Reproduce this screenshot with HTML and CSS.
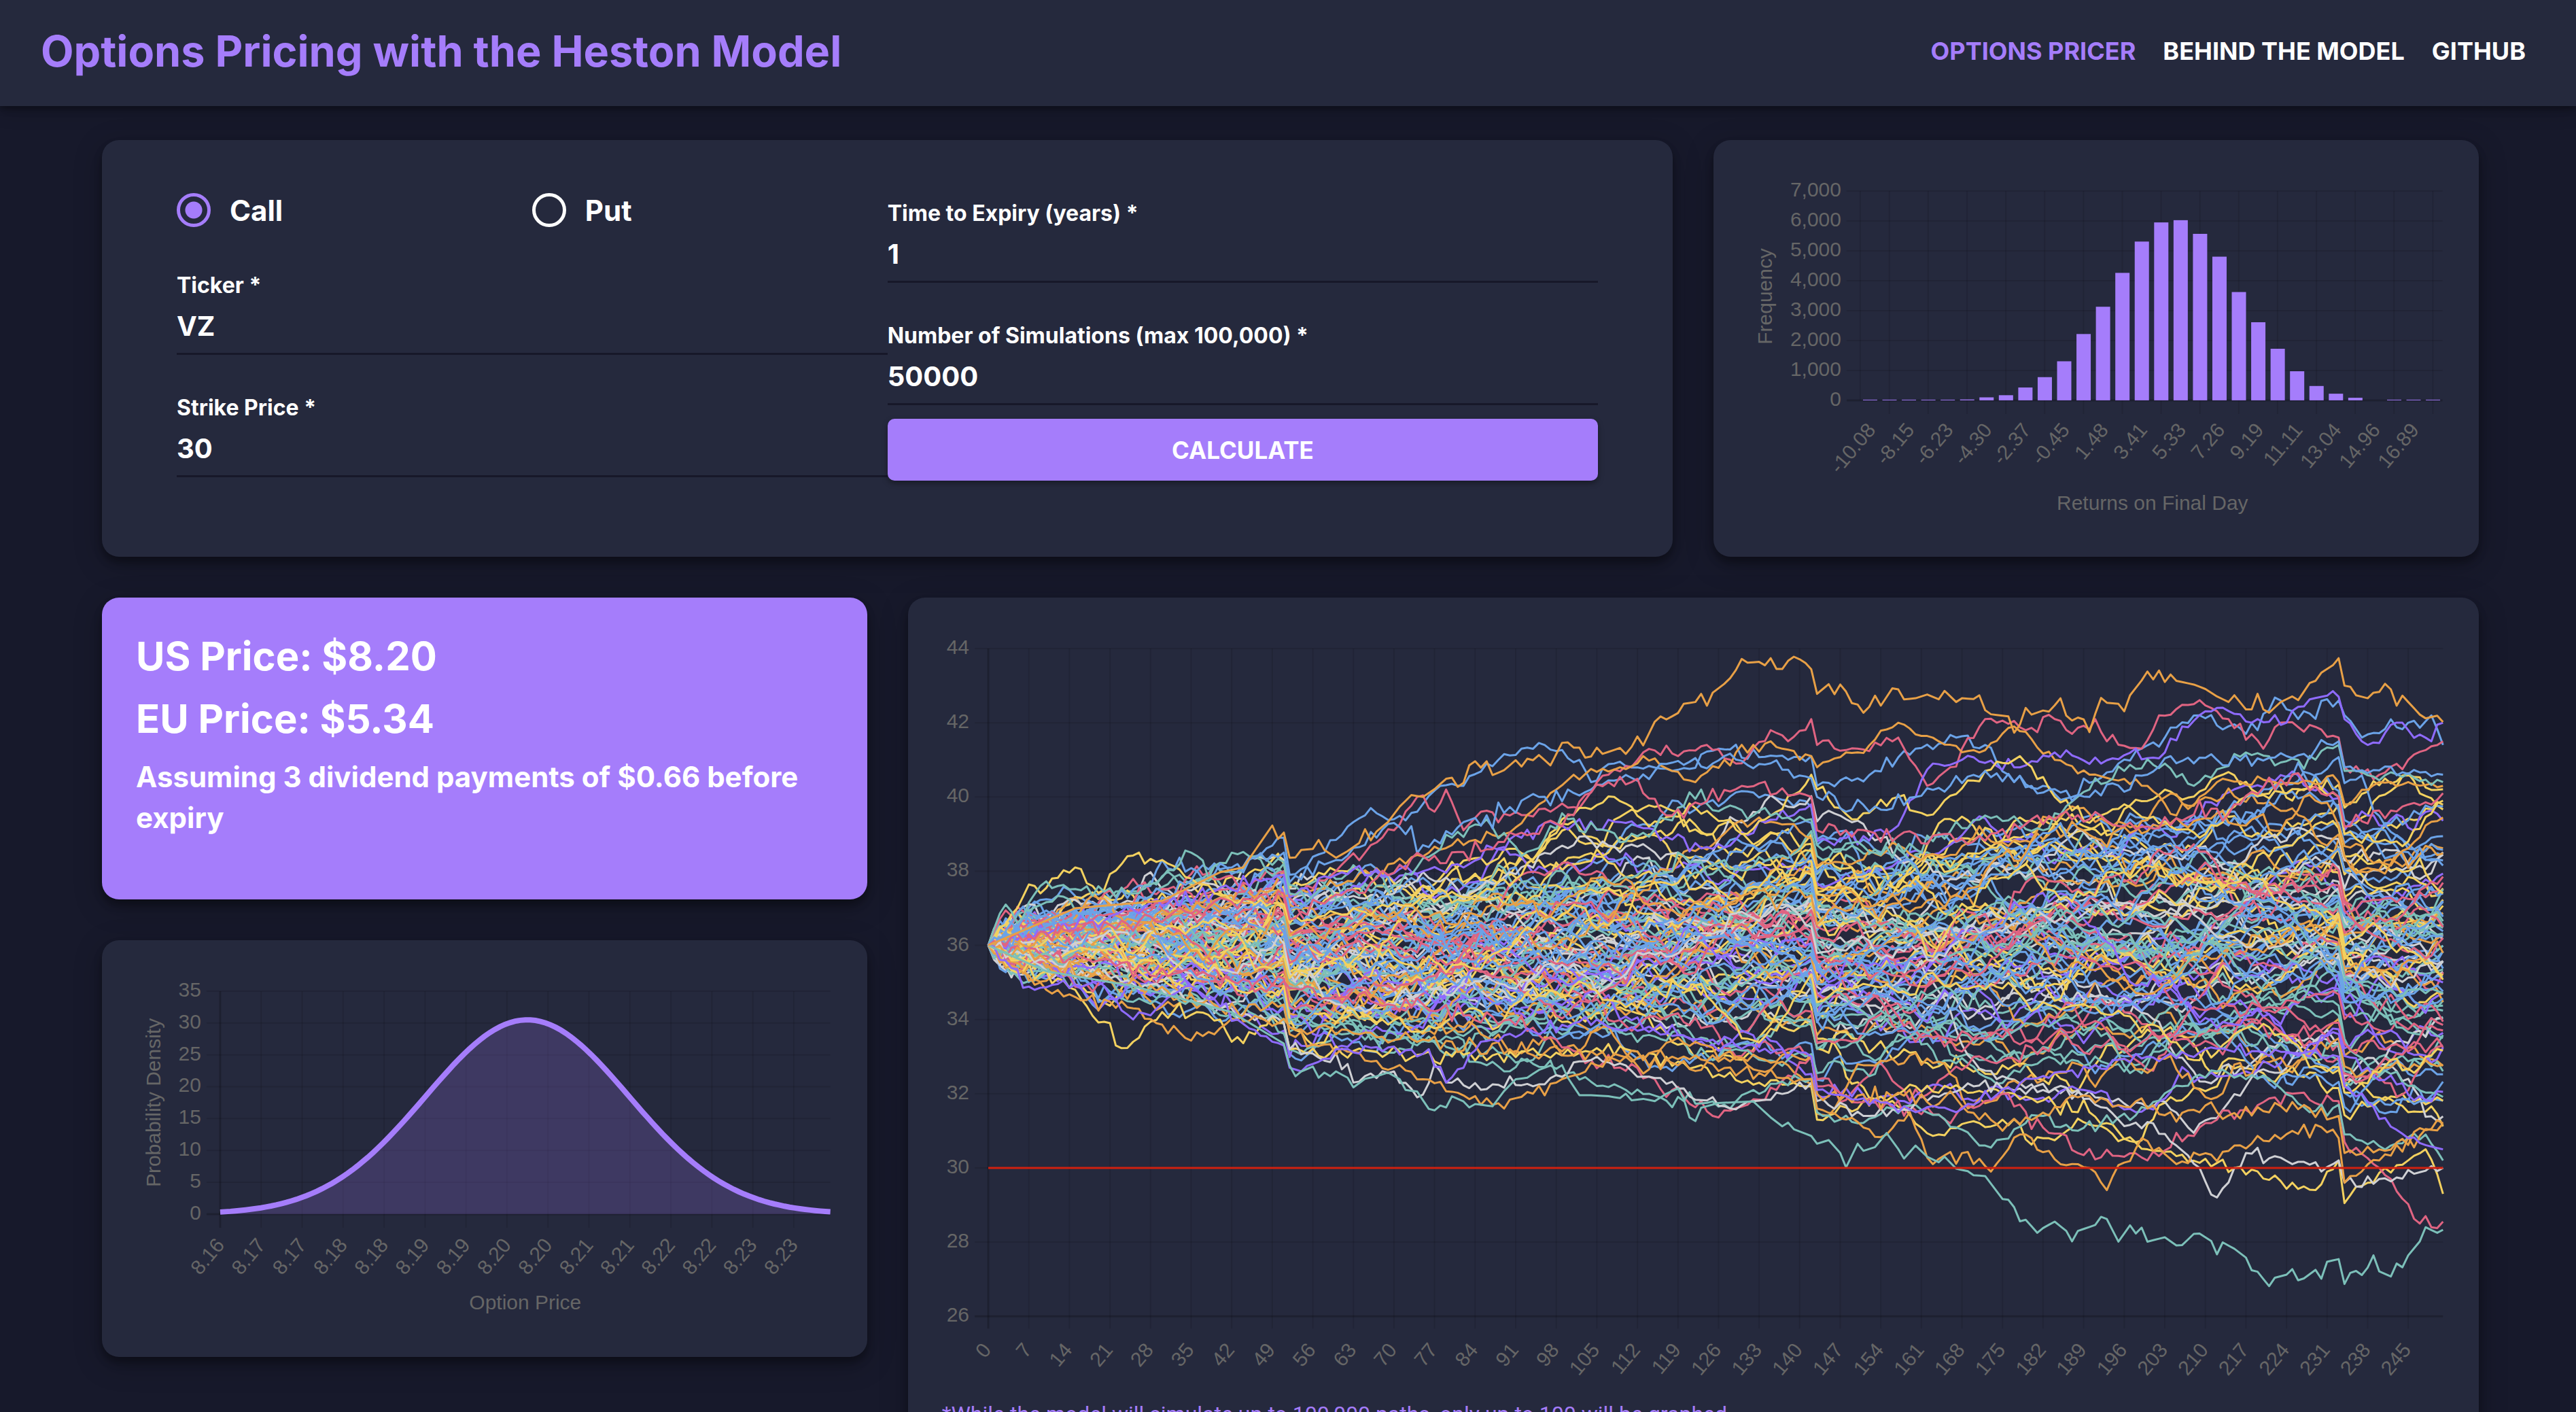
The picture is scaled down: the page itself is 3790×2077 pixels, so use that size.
FILE: index.html
```html
<!DOCTYPE html>
<html lang="en">
<head>
<meta charset="utf-8">
<title>Options Pricing with the Heston Model</title>
<link rel="stylesheet" href="styles.css">
</head>
<body>
<header class="app-bar">
  <h1 class="app-title">Options Pricing with the Heston Model</h1>
  <nav class="nav">
    <a class="nav-link nav-link-active" href="#pricer">Options Pricer</a>
    <a class="nav-link" href="#model">Behind the Model</a>
    <a class="nav-link" href="#github">GitHub</a>
  </nav>
</header>
<main class="board" id="pricer">
  <section class="card card-form">
    <form class="form">
      <div class="form-column">
        <div class="radios">
          <label class="radio"><input class="radio-input" type="radio" name="kind" value="call" checked>Call</label>
          <label class="radio"><input class="radio-input" type="radio" name="kind" value="put">Put</label>
        </div>
        <div class="field">
          <label class="field-label" for="ticker">Ticker *</label>
          <input class="field-input" id="ticker" type="text" value="VZ">
        </div>
        <div class="field">
          <label class="field-label" for="strike">Strike Price *</label>
          <input class="field-input" id="strike" type="text" value="30">
        </div>
      </div>
      <div class="form-column">
        <div class="field">
          <label class="field-label" for="expiry">Time to Expiry (years) *</label>
          <input class="field-input" id="expiry" type="text" value="1">
        </div>
        <div class="field">
          <label class="field-label" for="sims">Number of Simulations (max 100,000) *</label>
          <input class="field-input" id="sims" type="text" value="50000">
        </div>
        <button class="submit" type="button">Calculate</button>
      </div>
    </form>
  </section>
  <section class="card">
    <svg class="chart" id="returns" viewBox="0 0 1026 513" role="img" aria-label="Returns on final day"></svg>
  </section>
  <div class="side">
    <section class="card card-price">
      <h2 class="price">US Price: $8.20</h2>
      <h2 class="price">EU Price: $5.34</h2>
      <p class="price-note">Assuming 3 dividend payments of $0.66 before expiry</p>
    </section>
    <section class="card">
      <svg class="chart" id="density" viewBox="0 0 1026 513" role="img" aria-label="Option price density"></svg>
    </section>
  </div>
  <section class="card card-paths">
    <svg class="chart" id="paths" viewBox="0 0 2211 1106" role="img" aria-label="Simulated price paths"></svg>
    <p class="caption">*While the model will simulate up to 100,000 paths, only up to 100 will be graphed</p>
  </section>
</main>
<script src="charts.js"></script>
</body>
</html>
```
FILE: styles.css
```css
* {
  box-sizing: border-box;
}

body {
  margin: 0;
  height: 100vh;
  overflow-y: auto;
  scrollbar-width: none;
  background: #17192b;
  color: #fff;
  font-family: Inter, "Open Sans", sans-serif;
  font-weight: 700;
}

h1,
h2,
p {
  margin: 0;
}

.app-bar {
  display: flex;
  align-items: center;
  justify-content: space-between;
  height: 156px;
  padding: 0 74px 6px 60px;
  background: #25293d;
  box-shadow: 0 4px 10px rgba(0, 0, 0, 0.35), 0 10px 25px rgba(0, 0, 0, 0.15);
}

.app-title {
  color: #a57dfb;
  font-size: 63px;
  line-height: 80px;
}

.nav {
  display: flex;
  gap: 40px;
}

.nav-link {
  color: #fff;
  font-size: 36px;
  line-height: 60px;
  text-decoration: none;
  text-transform: uppercase;
}

.nav-link-active {
  color: #a57dfb;
}

.board {
  display: grid;
  grid-template-columns: repeat(3, minmax(0, 1fr));
  gap: 60px;
  align-items: start;
  padding: 50px 143px 50px 150px;
}

.card {
  padding: 50px;
  border-radius: 25px;
  background: #25293d;
  box-shadow: 0 8px 12px rgba(0, 0, 0, 0.3), 0 10px 40px rgba(0, 0, 0, 0.25);
}

.card-form {
  grid-column: span 2;
  align-self: stretch;
  padding: 50px 110px;
}

.card-paths {
  grid-column: span 2;
}

.form {
  display: grid;
  grid-template-columns: 1fr 1fr;
}

.form-column {
  display: flex;
  flex-direction: column;
}

.radios {
  display: grid;
  grid-template-columns: 1fr 1fr;
  height: 106px;
}

.radio {
  display: flex;
  align-items: center;
  gap: 28px;
  font-size: 42px;
}

.radio-input {
  appearance: none;
  width: 50px;
  height: 50px;
  margin: 0;
  border: 5px solid #fff;
  border-radius: 50%;
}

.radio-input:checked {
  border-color: #a57dfb;
  background: radial-gradient(circle, #a57dfb 12px, transparent 13px);
}

.field {
  display: flex;
  flex-direction: column;
  height: 180px;
  padding-top: 34px;
}

.field-label {
  font-size: 32px;
  line-height: 48px;
}

.field-input {
  height: 78px;
  padding: 0 0 4px;
  border: 0;
  border-bottom: 3px solid #171829;
  border-radius: 0;
  outline: 0;
  background: none;
  color: #fff;
  font: inherit;
  font-size: 40px;
}

.submit {
  height: 91px;
  border: 0;
  border-radius: 10px;
  background: #a57dfb;
  box-shadow: 0 4px 8px rgba(0, 0, 0, 0.35);
  color: #fff;
  font: inherit;
  font-size: 35px;
  text-transform: uppercase;
}

.side {
  display: grid;
  gap: 60px;
}

.card-price {
  height: 444px;
  padding-top: 46px;
  background: #a57dfb;
}

.price {
  margin-bottom: 12px;
  font-size: 58px;
  line-height: 80px;
}

.price-note {
  margin-top: 16px;
  font-size: 42px;
  line-height: 60px;
}

.caption {
  margin-top: 20px;
  color: #a57dfb;
  font-family: Roboto, sans-serif;
  font-size: 32px;
  font-weight: 400;
  line-height: 50px;
}

.chart {
  display: block;
  width: 100%;
  height: auto;
  fill: #666;
  font-family: "Liberation Sans", Arial, sans-serif;
  font-size: 30px;
  font-weight: 400;
}

.label-end {
  text-anchor: end;
}

.label-mid {
  text-anchor: middle;
}

.grid-line {
  stroke: rgba(0, 0, 0, 0.1);
  stroke-width: 2;
}

.zero-line {
  stroke: rgba(0, 0, 0, 0.2);
  stroke-width: 3;
}

.bar {
  fill: #a57dfb;
}

.density-area {
  fill: rgba(165, 125, 251, 0.2);
}

.density-line {
  fill: none;
  stroke: #a57dfb;
  stroke-width: 8;
}

.path {
  fill: none;
  stroke-width: 3;
  stroke-linejoin: round;
}

.strike-line {
  stroke: #d0200f;
  stroke-width: 3;
}
```
FILE: charts.js
```js
const NS = "http://www.w3.org/2000/svg";

function add(svg, tag, attrs, text) {
  const el = document.createElementNS(NS, tag);
  for (const key in attrs) el.setAttribute(key, attrs[key]);
  if (text !== undefined) el.textContent = text;
  svg.appendChild(el);
}

function line(svg, cls, x1, y1, x2, y2) {
  add(svg, "line", { class: cls, x1, y1, x2, y2 });
}

function yAxis(svg, c, labels) {
  labels.forEach((text, i) => {
    const y = c.bottom - (c.bottom - c.top) * i / (labels.length - 1);
    line(svg, i ? "grid-line" : "zero-line", c.left - 20, y, c.right, y);
    add(svg, "text", { class: "label-end", x: c.left - 28, y: y + 8 }, text);
  });
}

function slanted(svg, x, y, text) {
  add(svg, "text", { class: "label-end", y: 10, transform: `translate(${x} ${y}) rotate(-50)` }, text);
}

function upright(svg, y, text) {
  add(svg, "text", { class: "label-mid", transform: `translate(36 ${y}) rotate(-90)` }, text);
}

/* histogram of final-day returns */
(function () {
  const svg = document.getElementById("returns");
  const c = { left: 166, right: 1023, top: 25, bottom: 333 };
  const counts = [8, 8, 8, 8, 8, 30, 100, 172, 430, 776, 1306, 2218, 3130, 4263, 5310, 5950, 6025, 5568,
    4805, 3622, 2612, 1725, 973, 480, 222, 86, 0, 8, 8, 8];
  const names = ["-10.08", "-8.15", "-6.23", "-4.30", "-2.37", "-0.45", "1.48", "3.41", "5.33", "7.26",
    "9.19", "11.11", "13.04", "14.96", "16.89"];
  const step = (c.right - c.left) / counts.length;
  yAxis(svg, c, ["0", "1,000", "2,000", "3,000", "4,000", "5,000", "6,000", "7,000"]);
  line(svg, "grid-line", c.left, c.top, c.left, c.bottom);
  names.forEach((name, i) => {
    const x = c.left + step * (2 * i + 1.5);
    line(svg, "grid-line", x, c.top, x, c.bottom + 20);
    slanted(svg, c.left + step * (2 * i + 0.5) + 2, c.bottom + 38, name);
  });
  counts.forEach((n, i) => {
    if (!n) return;
    const h = Math.max(1, n * (c.bottom - c.top) / 7000);
    add(svg, "rect", { class: "bar", x: c.left + step * i + 4, y: c.bottom - h, width: 21, height: h });
  });
  upright(svg, 180, "Frequency");
  add(svg, "text", { class: "label-mid", x: 596, y: 494 }, "Returns on Final Day");
})();

/* density of the option price */
(function () {
  const svg = document.getElementById("density");
  const c = { left: 124, right: 1022, top: 25, bottom: 353 };
  yAxis(svg, c, ["0", "5", "10", "15", "20", "25", "30", "35"]);
  ["8.16", "8.17", "8.17", "8.18", "8.18", "8.19", "8.19", "8.20", "8.20", "8.21", "8.21", "8.22", "8.22",
    "8.23", "8.23"].forEach((name, i) => {
    const x = c.left + 60.3 * i;
    line(svg, i ? "grid-line" : "zero-line", x, c.top, x, c.bottom + 20);
    slanted(svg, x, c.bottom + 40, name);
  });
  const pts = [];
  for (let i = 0; i <= 120; i++) {
    const z = i / 20 - 3.02;
    const y = c.bottom - 30.5 * Math.exp(-z * z / 2) * (c.bottom - c.top) / 35;
    pts.push((c.left + (c.right - c.left) * i / 120).toFixed(1) + " " + y.toFixed(1));
  }
  const d = "M" + pts.join("L");
  add(svg, "path", { class: "density-area", d: `${d}L${c.right} ${c.bottom}L${c.left} ${c.bottom}Z` });
  add(svg, "path", { class: "density-line", d });
  upright(svg, 189, "Probability Density");
  add(svg, "text", { class: "label-mid", x: 573, y: 493 }, "Option Price");
})();

/* simulated paths, one point per trading day */
(function () {
  const svg = document.getElementById("paths");
  const c = { left: 68, right: 2208, top: 25, bottom: 1007 };
  const DAYS = 251;
  const EX_DAYS = [52, 143, 234];
  const DIVIDEND = 0.66;
  const RED = "#e06482", ORANGE = "#e8a046", YELLOW = "#f3d15f", TEAL = "#7cc0b9", BLUE = "#6ba3e8",
    PURPLE = "#8f6bff", GREY = "#cfd0d4";
  const palette = [RED, ORANGE, YELLOW, TEAL, BLUE, PURPLE, GREY];

  let seed = 20210;
  function rand() {
    seed = (seed + 0x6d2b79f5) | 0;
    let t = Math.imul(seed ^ (seed >>> 15), 1 | seed);
    t = (t + Math.imul(t ^ (t >>> 7), 61 | t)) ^ t;
    return ((t ^ (t >>> 14)) >>> 0) / 4294967296;
  }
  function normal() {
    return Math.sqrt(-2 * Math.log(1 - rand())) * Math.cos(2 * Math.PI * rand());
  }
  function pick(list) {
    return list[Math.floor(rand() * list.length)];
  }
  function at(knots, t) {
    for (let i = 1; i < knots.length; i++) {
      const [x0, y0] = knots[i - 1], [x1, y1] = knots[i];
      if (t <= x1) return y0 + (y1 - y0) * (t - x0) / (x1 - x0);
    }
    return knots[knots.length - 1][1];
  }
  function pairs(text) {
    return text.trim().split(/\s+/).map(p => p.split(",").map(Number));
  }
  function draw(values, stroke) {
    const d = "M" + values.map((v, i) =>
      (c.left + (c.right - c.left) * i / DAYS).toFixed(1) + " " +
      (c.top + (44 - v) * (c.bottom - c.top) / 18).toFixed(1)).join("L");
    add(svg, "path", { class: "path", d, stroke });
  }

  const ceiling = pairs("0,36.05 1,36.6 3,37 8,37.6 30,38.3 51,38.6 52,38 75,38.6 100,39.9 130,40.4 142,40.8 143,39.7 200,40.6 233,41.6 234,40.7 251,40.8");
  const floor = pairs("0,35.95 1,35.5 4,35 10,34.7 20,34.1 51,33.4 52,32.8 85,32.2 142,31.9 143,31.3 190,30.1 233,30.2 234,29.8 251,30");

  function simulate() {
    for (;;) {
      const values = [36];
      let v = 36, drift = 0, ok = true;
      for (let t = 1; t <= DAYS; t++) {
        drift = 0.2 * drift + 0.155 * normal();
        v += drift + 0.006 + (36 - v) * 0.0006;
        if (t < 8) v += 0.12 * normal();
        if (EX_DAYS.includes(t)) v -= DIVIDEND;
        if (v > at(ceiling, t) || v < at(floor, t)) { ok = false; break; }
        values.push(v);
      }
      if (ok) return values;
    }
  }
  function follow(knots, rough) {
    const values = [];
    for (let t = 0; t <= DAYS; t++) {
      const anchored = knots.some(k => k[0] === t);
      values.push(at(knots, t) + (anchored ? 0 : rough * normal()));
    }
    return values;
  }
  function colour(values) {
    if (rand() < 0.55) return pick(palette);
    const v = values[160];
    if (v > 38.4) return pick([RED, RED, BLUE, TEAL, PURPLE]);
    if (v > 37.2) return pick([YELLOW, GREY, YELLOW, BLUE]);
    if (v > 35.8) return pick([TEAL, TEAL, BLUE, GREY, RED]);
    if (v > 34.3) return pick([BLUE, PURPLE, BLUE, TEAL]);
    return pick([ORANGE, YELLOW, ORANGE, RED]);
  }

  yAxis(svg, c, ["26", "28", "30", "32", "34", "36", "38", "40", "42", "44"]);
  for (let day = 0; day <= 245; day += 7) {
    const x = c.left + (c.right - c.left) * day / DAYS;
    line(svg, day ? "grid-line" : "zero-line", x, c.top, x, c.bottom + 18);
    slanted(svg, x - 2, c.bottom + 44, day);
  }

  const tracked = [
    [BLUE, 0.1, "0,36 20,37 28,37.6 30,38.3 36,38 42,38.1 46,38.4 50,38.9 51,38.9 52,37.9 58,38.5 62,39.2 66,39.7 70,39.4 74,39.6 78,40.3 82,40.3 86,40.9 92,41.3 96,41.4 102,41 104,40.4 108,40.9 118,40.7 126,41.3 136,41.1 142,41.1 143,40.3 150,40.5 160,41.3 167,41.6 172,41.4 176,40.6 182,40.3 187,40 195,40.9 203,41.6 209,42.2 217,41.7 223,42.6 226,42.1 233,42.6 234,42.2 237,41.6 245,42 249,42.2 251,41.4"],
    [RED, 0.1, "0,36 40,37.5 51,38 52,37.3 60,38 66,38.7 70,39.1 74,40 77,39.6 79,40.2 82,39.1 85,39.6 90,39.5 97,39.6 102,39.7 107,40.6 113,41.2 119,41.1 124,41.4 129,40.9 135,41.8 138,41.5 142,42.1 143,41.4 150,41.3 157,41.6 162,40.3 166,40.8 168,41.3 172,42.1 179,41.8 184,42.1 187,41.7 191,42.1 193,41.5 199,41.3 202,42.2 208,42.5 214,42.1 220,41.3 223,42 233,41.6 234,40.8 240,40.6 245,41 251,41.5"],
    [ORANGE, 0.08, "0,36 60,37.6 80,38.7 89,39 95,39.8 101,40.6 109,40.8 113,41.1 122,40.4 129,41.2 135,41.5 140,41 142,41.1 143,40.8 150,41.2 157,42 164,41.5 171,41.2 177,41.9 184,41 190,40.6 200,40.3 205,39.5 212,40.4 222,40.4 233,40.4 234,39.8 240,40.4 251,40.3"],
    [PURPLE, 0.1, "0,36 51,37.9 52,37.3 60,37.9 82,38.1 95,39.2 110,39.3 125,38.6 142,39.8 143,38.8 155,39 160,40 163,40.9 168,41 177,40.8 184,41.2 192,40.9 203,41.2 206,41.9 212,42.4 218,42 224,42 230,42.7 233,42.7 234,42.1 238,41.4 244,42 249,41.5 251,42"],
    [YELLOW, 0.08, "0,36 8,37.6 9,37.4 11,37.8 15,38.1 18,37.6 20,37.5 24,38.4 26,38.5 27,38.2 30,38.3 35,37.8 42,37.2 51,37.1 52,36.6 90,37.6 100,39.5 108,40 114,39.2 122,39.7 130,39 136,39.6 142,40.6 143,40.2 150,39.4 157,40 162,39.5 172,40.7 178,41.1 184,40 190,39.3 196,39.8 204,39.2 210,39 217,40 230,40.2 233,40 234,39 245,38.8 251,39.9"],
    [TEAL, 0.12, "0,36 3,37.1 5,36.6 9,37.6 12,37.6 25,37.4 35,38.5 38,37.8 42,38.5 45,38.4 48,38 51,38.2 52,37.4 70,37.6 80,38.9 86,39.4 92,38.4 100,39.4 110,38.8 117,39.4 123,40.2 127,39.7 132,39.5 142,39.4 143,38.7 160,38.6 172,39.5 182,39.1 190,40.2 196,40.7 203,40.9 208,40.3 217,41.2 226,41 233,41.4 234,40.7 251,40.4"],
    [BLUE, 0.12, "0,36 51,38.5 52,37.7 60,38.3 70,39.3 75,38.7 92,39.9 104,40.2 115,40.7 127,41.1 142,40.5 143,40 152,39.6 160,40 172,40.7 180,40.3 190,40 200,40.6 204,41.1 212,41 224,41.1 233,41.5 234,40.8 251,40.6"],
    [RED, 0.12, "0,36 51,37.4 52,36.7 75,38.4 95,39 107,40.4 111,40.4 117,39.5 130,40.3 142,40 143,39.1 170,38.8 180,39.4 190,39.4 200,39.2 215,39.8 225,40.6 233,40 234,39.2 251,40.1"],
    [YELLOW, 0.1, "0,36 15,34.8 18,34.1 21,33.9 22,33.3 25,33.4 30,34.2 36,34.2 40,34 42,33.4 50,33.9 51,33.9 52,33.2 80,33 110,33.2 130,32.3 142,32.2 143,31.3 160,32.2 175,32 190,31.5 200,30.5 215,30 225,29.6 229,29.4 231,29.9 233,30.2 234,29.05 238,29.6 248,30.5 251,29.3"],
    [RED, 0.12, "0,36 90,34 118,32.1 125,31.4 131,31.7 142,33 143,32.2 165,31.3 175,32 188,30.4 200,30.2 212,31.3 225,32 233,31.8 234,30.7 242,29.7 247,28.5 248,28.7 249,28.4 251,28.55"],
    [TEAL, 0.1, "0,36 52,34 90,33 110,32.1 128,31.6 132,32.1 142,32.4 143,31.5 150,31.2 160,31.7 172,30.6 182,31.4 188,31 200,31.6 212,32.6 221,32.4 228,31.5 233,31.7 234,30.9 242,30.6 248,30.9 251,30.2"],
    [GREY, 0.1, "0,36 51,33.9 52,33.2 62,32.8 63,32.3 70,32.6 74,31.9 77,32.8 80,32.3 94,32.2 105,33 128,31.6 142,32.3 143,31.8 152,31.4 170,32.2 188,32.1 195,31.3 201,31.2 205,30.6 209,30 212,29.2 215,30 217,30.4 225,30.1 230,29.9 233,30.2 234,29.6 240,29.7 251,30"],
    [ORANGE, 0.1, "0,36 10,34.8 25,34.3 34,33.5 39,33.6 45,34.4 51,34.4 52,33.6 70,32.7 87,31.7 110,33 142,32.4 143,31.6 155,30.9 159,31.5 163,30.1 168,30.4 173,29.9 178,30.9 185,30.1 190,30 193,29.4 199,30.8 205,30.1 215,30.6 230,31.1 233,30.8 234,29.6 240,30.2 251,31.2"],
    [ORANGE, 0.12, "0,36 52,33.8 90,33.2 120,33 142,33 143,32 165,31.9 175,31 188,31.9 200,31.6 212,31.5 228,31.6 233,31.4 234,30.4 240,30.5 251,31.2"],
    [PURPLE, 0.1, "0,36 8,34.8 20,34.9 25,34 35,34.9 43,34 49,33.4 51,33.3 52,32.7 54,32.6 60,33.2 76,33.2 79,32.3 85,33.4 105,34 142,33 143,32.1 160,31.5 170,31.7 180,32.4 210,33.2 233,33 234,32.2 245,30.8 251,30.5"]
  ];

  for (let i = 0; i < 92; i++) {
    const values = simulate();
    draw(values, colour(values));
  }
  tracked.forEach(([stroke, rough, text]) => draw(follow(pairs(text), rough), stroke));

  const lowest = "0,36 10,35.3 25,34.9 42,34.2 51,33.35 52,32.76 53,32.47 54,32.6 56,32.73 57,32.43 58,32.57 59,32.47 60,32.6 62,32.43 63,32.17 65,32.4 67,32.47 69,32.57 71,32.39 72,32.1 74,32.06 76,31.59 77,31.55 78,31.68 79,31.63 80,31.93 82,31.79 83,31.63 84,31.72 86,31.68 87,31.66 89,32.07 91,32.39 93,32.43 95,32.64 97,32.76 98,32.67 99,32.77 100,32.43 102,31.96 104,31.96 107,31.93 109,31.88 110,32 111,31.82 113,31.86 115,31.8 117,32 119,32.14 120,31.86 121,31.36 122,31.26 123,31.62 126,31.75 132,31.79 135,31.36 137,31.12 138,31.22 139,31.04 142,30.86 143,30.65 145,30.75 147,30.4 148,30.01 150,30.65 151,30.46 153,30.56 155,30.94 157,30.51 158,30.25 160,30.6 162,30.3 164,30.15 165,30.3 167,29.98 169,29.91 170,29.8 172,29.78 175,29.16 176,29.14 177,28.94 178,28.56 179,28.6 181,28.25 182,28.38 184,28.55 186,28.3 187,28.02 188,28.3 191,28.46 192,28.68 193,28.62 195,28.01 197,28.45 198,28.23 199,28.39 200,28.01 203,28.13 205,27.91 206,27.92 208,28.22 209,28.23 211,28.03 212,27.67 213,27.99 215,27.82 217,27.58 218,27.24 219,27.2 221,26.81 222,27.04 224,27.12 225,27.27 226,26.97 227,27.02 229,27.25 230,27.01 231,27.47 233,27.54 234,26.87 235,27.17 236,27.22 237,27.11 238,27.31 239,27.64 240,27.21 242,27.07 243,27.42 244,27.32 245,27.64 247,28.02 248,28.4 250,28.25 251,28.33";
  const highest = "0,36 15,37 30,37.2 40,37.97 44,38.1 49,39.23 50,38.87 51,39.04 52,38.36 53,38.37 54,38.57 56,38.6 57,38.84 58,38.57 60,38.36 62,38.54 64,38.76 65,39.13 66,38.83 67,39.07 69,39.33 71,39.74 73,40.05 75,40 77,40.21 79,40.49 80,40.52 81,40.27 82,40.38 83,40.85 84,40.96 85,40.79 86,40.96 87,40.59 89,40.72 91,40.99 92,40.82 93,41.03 94,40.99 95,41.13 97,40.85 99,41.46 100,41.47 101,41.33 102,41.33 103,41.06 104,41.09 105,41.33 106,41.16 109,41.32 110,41.16 111,41.35 112,41.63 113,41.39 115,42.03 116,42.17 117,42.09 119,42.26 120,42.51 122,42.56 123,42.78 124,42.46 125,42.81 127,43.05 128,43.2 129,43.42 130,43.72 131,43.62 133,43.64 134,43.55 135,43.74 136,43.45 137,43.45 138,43.67 139,43.78 140,43.71 141,43.61 142,43.44 143,42.78 145,43.04 146,42.77 147,43.03 148,42.84 149,42.53 150,42.49 151,42.27 152,42.43 153,42.73 154,42.46 156,42.93 157,42.9 158,42.63 160,42.66 162,42.76 164,42.63 165,42.86 167,42.56 168,42.66 170,42.64 171,42.74 172,42.34 173,42.23 176,42.17 177,41.73 178,41.95 179,42.4 180,42.22 182,42.33 183,42.3 184,42.47 185,42.66 186,42.19 187,42.06 188,42.14 189,42.09 190,41.75 191,42.24 192,42.67 193,42.54 195,42.51 196,42.31 197,42.74 199,43.14 200,43.38 201,43.17 202,43.41 203,43.1 204,43.3 205,43.13 208,43.03 210,42.91 212,42.71 214,42.56 215,42.74 217,42.36 218,42.36 219,42.78 220,42.36 221,42.27 223,42.56 225,42.71 226,42.61 228,43.07 229,43.13 230,43.35 232,43.55 233,43.74 234,43 235,42.97 236,42.74 238,42.66 239,42.81 240,42.83 241,43.05 242,42.9 243,42.46 244,42.73 247,42.22 248,42.12 250,42.19 251,42.02";
  draw(follow(pairs(lowest), 0), TEAL);
  draw(follow(pairs(highest), 0), ORANGE);

  const strikeY = c.top + 14 * (c.bottom - c.top) / 18;
  line(svg, "strike-line", c.left, strikeY, c.right, strikeY);
})();
```
